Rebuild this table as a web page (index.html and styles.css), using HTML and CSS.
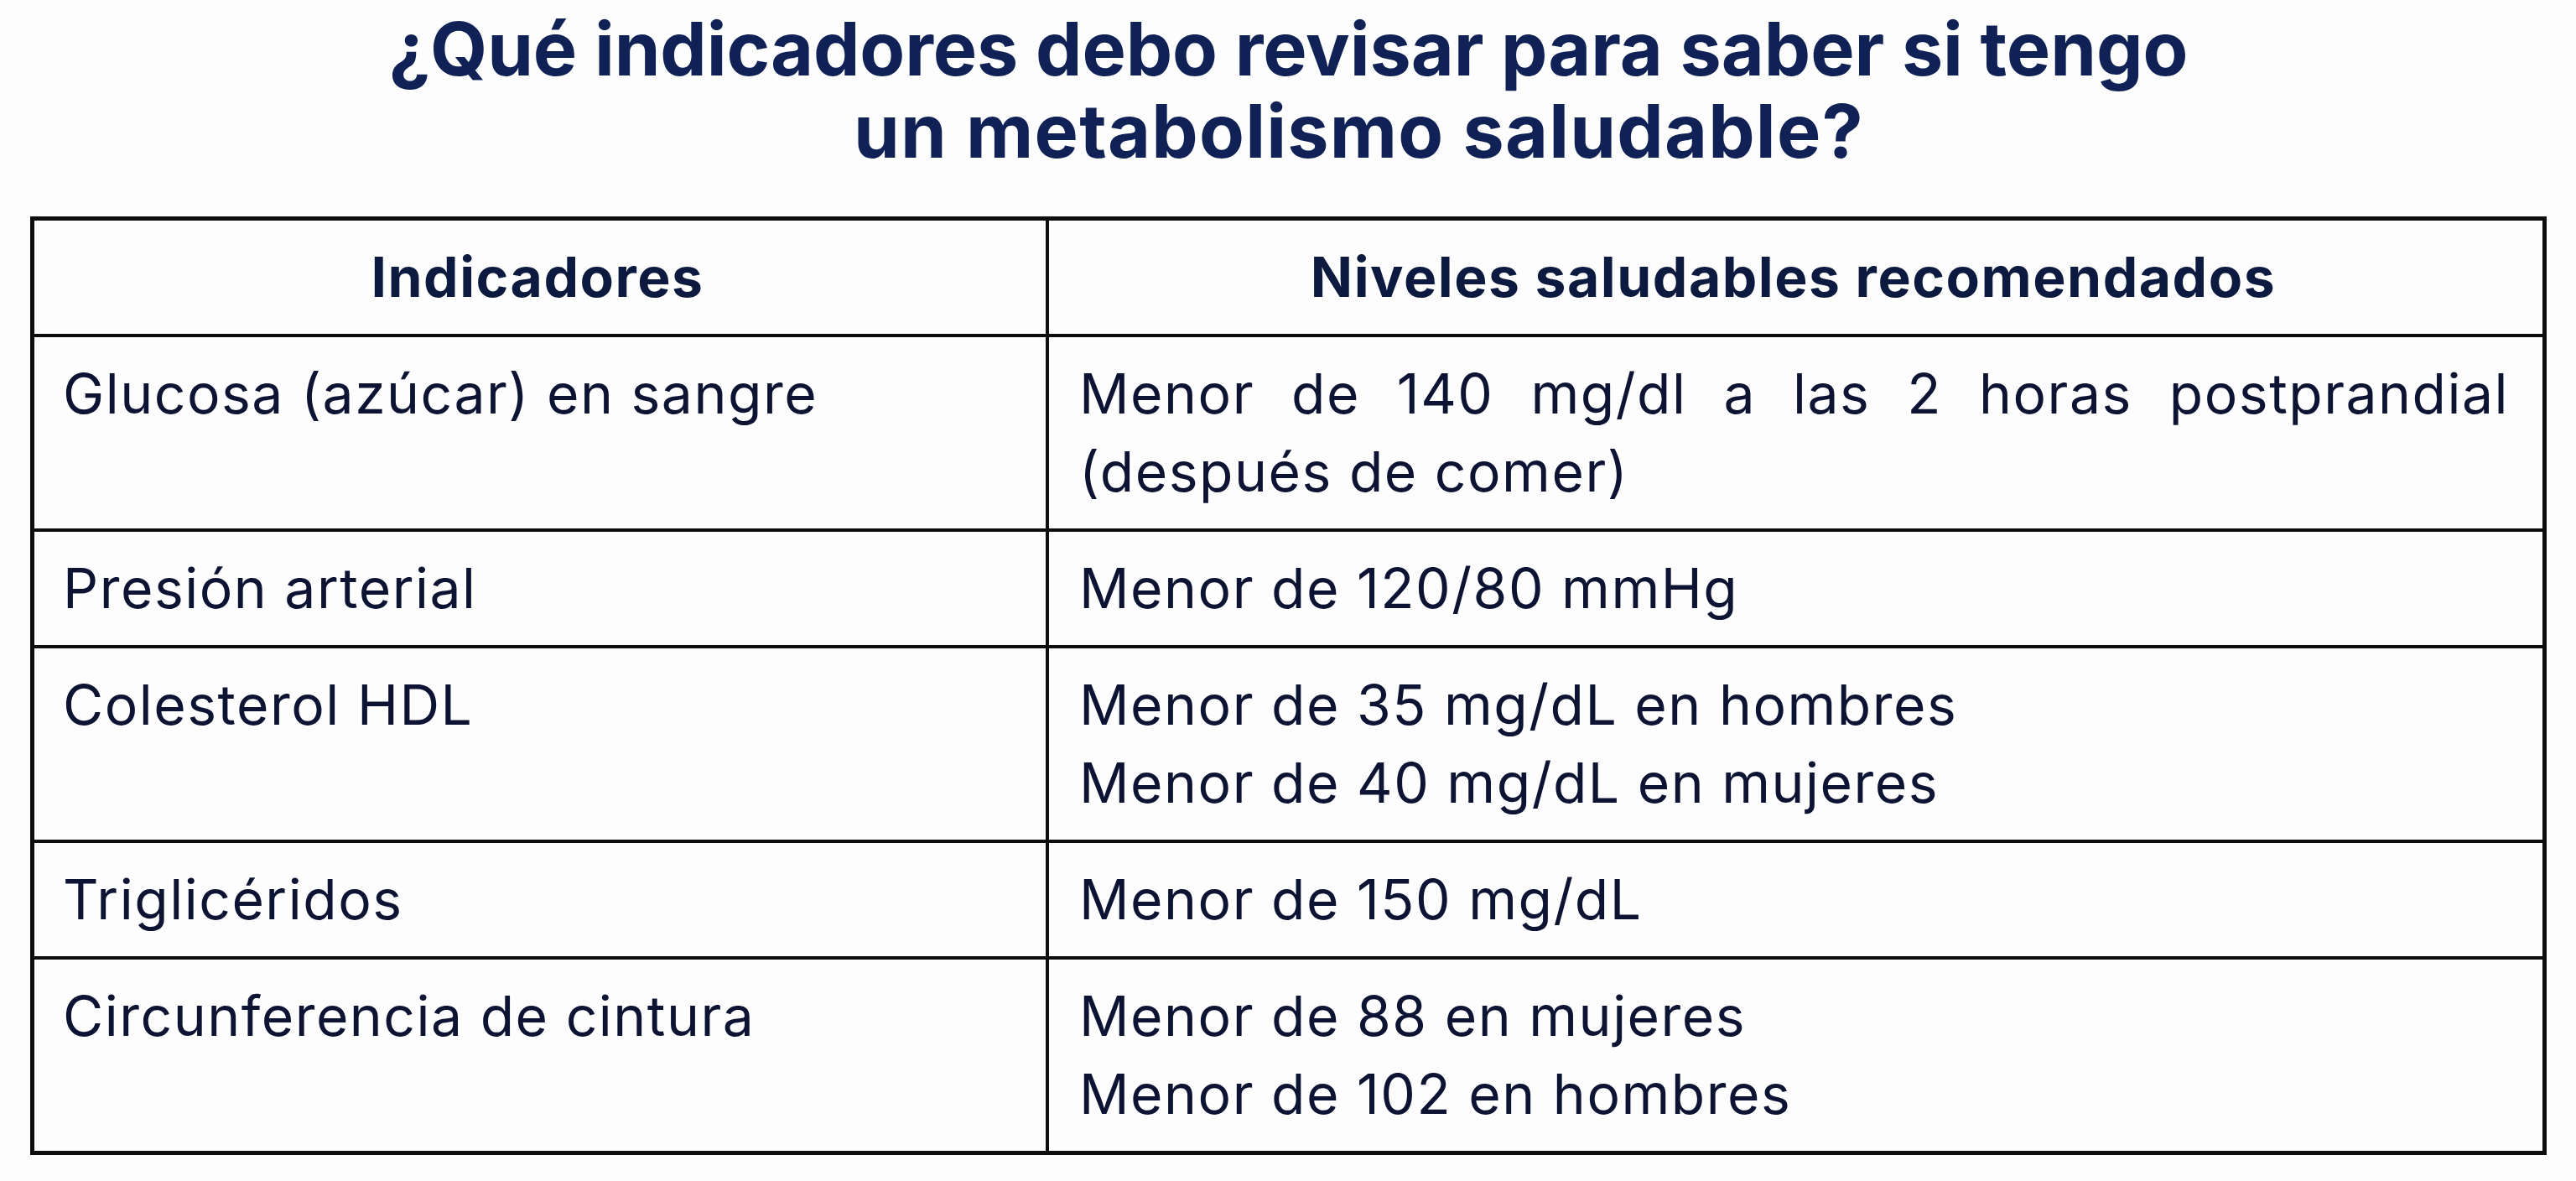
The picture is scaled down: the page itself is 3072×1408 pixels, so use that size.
FILE: index.html
```html
<!DOCTYPE html>
<html lang="es">
<head>
<meta charset="utf-8">
<title>Indicadores de metabolismo saludable</title>
<link rel="stylesheet" href="styles.css">
</head>
<body>
<main class="page">
  <h1 class="title"><span class="title-line">¿Qué indicadores debo revisar para saber si tengo</span><span class="title-line title-line-2">un metabolismo saludable?</span></h1>
  <table class="levels">
    <thead>
      <tr>
        <th class="col-ind">Indicadores</th>
        <th class="col-lvl">Niveles saludables recomendados</th>
      </tr>
    </thead>
    <tbody>
      <tr>
        <td>Glucosa (azúcar) en sangre</td>
        <td><span class="just">Menor de 140 mg/dl a las 2 horas postprandial</span><span class="line">(después de comer)</span></td>
      </tr>
      <tr>
        <td>Presión arterial</td>
        <td>Menor de 120/80 mmHg</td>
      </tr>
      <tr>
        <td>Colesterol HDL</td>
        <td><span class="line">Menor de 35 mg/dL en hombres</span><span class="line">Menor de 40 mg/dL en mujeres</span></td>
      </tr>
      <tr>
        <td>Triglicéridos</td>
        <td>Menor de 150 mg/dL</td>
      </tr>
      <tr>
        <td>Circunferencia de cintura</td>
        <td><span class="line">Menor de 88 en mujeres</span><span class="line">Menor de 102 en hombres</span></td>
      </tr>
    </tbody>
  </table>
</main>
</body>
</html>
```

FILE: styles.css
```css
html, body {
  margin: 0;
  padding: 0;
  background: #fdfdfd;
}

.page {
  width: 3072px;
  height: 1408px;
  padding: 0 35px 0 36px;
  box-sizing: border-box;
  font-family: Inter, "Noto Sans", "Liberation Sans", sans-serif;
}

.title {
  margin: 0;
  padding-top: 9px;
  height: 258px;
  box-sizing: border-box;
  text-align: center;
  font-size: 88px;
  line-height: 98px;
  font-weight: 700;
  color: #0f2155;
  letter-spacing: -0.1px;
}

.title-line {
  display: block;
}

.title-line-2 {
  padding-left: 168px;
  letter-spacing: 1.2px;
}

.levels {
  width: 100%;
  border-collapse: collapse;
  border: 5px solid #0d0d0d;
  table-layout: fixed;
  color: #0d1433;
  font-size: 66px;
  line-height: 93px;
  letter-spacing: 1.5px;
}

.levels th,
.levels td {
  border: 4px solid #0d0d0d;
  padding: 21px 40px 21px 34px;
  vertical-align: top;
  text-align: left;
  font-weight: 400;
}

.levels th {
  text-align: center;
  font-weight: 700;
  color: #0c1a3f;
}

.levels .col-ind {
  width: 1132px;
}

.levels td + td {
  padding-left: 36px;
}

.line {
  display: block;
}

.just {
  display: block;
  text-align: justify;
  text-align-last: justify;
}
```
